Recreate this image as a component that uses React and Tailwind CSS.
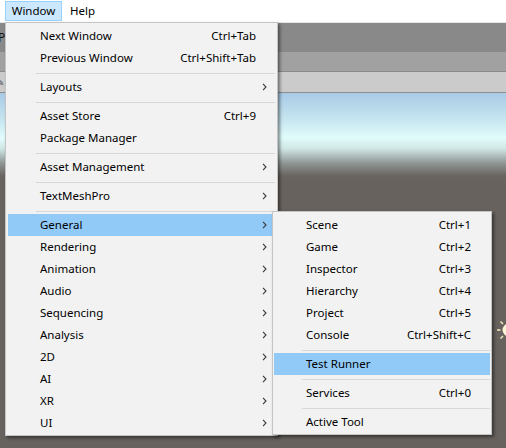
import React from "react";

const font = { fontFamily: "'Noto Sans', 'Noto Sans CJK KR', sans-serif" };

const mainItems = [
  { label: "Next Window", shortcut: "Ctrl+Tab" },
  { label: "Previous Window", shortcut: "Ctrl+Shift+Tab" },
  { sep: true },
  { label: "Layouts", sub: true },
  { sep: true },
  { label: "Asset Store", shortcut: "Ctrl+9" },
  { label: "Package Manager" },
  { sep: true },
  { label: "Asset Management", sub: true },
  { sep: true },
  { label: "TextMeshPro", sub: true },
  { sep: true },
  { label: "General", sub: true, active: true },
  { label: "Rendering", sub: true },
  { label: "Animation", sub: true },
  { label: "Audio", sub: true },
  { label: "Sequencing", sub: true },
  { label: "Analysis", sub: true },
  { label: "2D", sub: true },
  { label: "AI", sub: true },
  { label: "XR", sub: true },
  { label: "UI", sub: true },
];

const subItems = [
  { label: "Scene", shortcut: "Ctrl+1" },
  { label: "Game", shortcut: "Ctrl+2" },
  { label: "Inspector", shortcut: "Ctrl+3" },
  { label: "Hierarchy", shortcut: "Ctrl+4" },
  { label: "Project", shortcut: "Ctrl+5" },
  { label: "Console", shortcut: "Ctrl+Shift+C" },
  { sep: true },
  { label: "Test Runner", active: true },
  { sep: true },
  { label: "Services", shortcut: "Ctrl+0" },
  { sep: true },
  { label: "Active Tool" },
];

const Chevron = () => (
  <svg width="5" height="8" viewBox="0 0 5 8">
    <path d="M1 0.8 L4 4 L1 7.2" fill="none" stroke="#3a3a3a" strokeWidth="1.1" />
  </svg>
);

// Menu row: label, shortcut on the right, chevron column
const MenuRow = ({ item, mx, sepClass }) => {
  if (item.sep) {
    return (
      <div className={`pt-[4px] pb-[2px] ${sepClass}`}>
        <div className="h-[1px] bg-[#d7d7d7]" />
      </div>
    );
  }
  return (
    <div
      className={`flex h-[22px] items-center ${mx} pl-[32px] ${
        item.active ? "bg-[#91c9f7]" : ""
      }`}
    >
      <span className="flex-1 whitespace-nowrap">{item.label}</span>
      {item.shortcut && <span className="whitespace-nowrap">{item.shortcut}</span>}
      <div className="w-[19px] pl-[6px] flex items-center">{item.sub && <Chevron />}</div>
    </div>
  );
};

const Sun = () => (
  <svg width="36" height="32" viewBox="0 0 36 32" className="absolute left-[491px] top-[314px]">
    <circle cx="18" cy="16" r="6.5" fill="#fff5d6" />
    {[0, 45, 90, 135, 180, 225, 270, 315].map((a) => {
      const r = (a * Math.PI) / 180;
      return (
        <line
          key={a}
          x1={18 + Math.cos(r) * 8.5}
          y1={16 + Math.sin(r) * 8.5}
          x2={18 + Math.cos(r) * 12}
          y2={16 + Math.sin(r) * 12}
          stroke="#efe3bb"
          strokeWidth="1.6"
        />
      );
    })}
  </svg>
);

export default function App() {
  return (
    <div
      className="relative w-[506px] h-[448px] overflow-hidden bg-[#67625d] text-[11.5px] text-black"
      style={font}
    >
      {/* Menu bar */}
      <div className="flex h-[22px] items-center bg-white pl-[5px]">
        <div className="flex h-[20px] w-[57px] items-center justify-center border border-[#99d1ff] bg-[#cce8ff]">
          Window
        </div>
        <div className="px-[8px]">Help</div>
      </div>

      {/* Unity editor behind the menu */}
      <div className="h-[1px] bg-[#e6e6e6]" />
      <div className="flex h-[29px] items-center bg-[#898989]">
        <span className="-ml-[2px] text-[12px] text-[#111]">P</span>
      </div>
      <div className="h-[19px] bg-[#a1a1a1]" />
      <div className="h-[1px] bg-[#8a8a8a]" />
      <div className="flex h-[20px] items-center bg-[#cbcbcb]">
        <span className="-ml-[4px] text-[10px] text-[#555]">✎</span>
      </div>
      <div className="h-[1px] bg-[#8d8d8d]" />
      <div className="h-[90px] bg-[linear-gradient(to_bottom,#a8cae6_0%,#c7e6f0_30%,#e1fcfb_50%,#cfe6e4_62%,#8f9694_78%,#6a6560_92%,#67625d_100%)]" />

      <Sun />

      {/* Window menu */}
      <div className="absolute left-[5px] top-[22px] w-[273px] border border-[#c4c4c4] bg-[#f2f2f2] pt-[2px] pb-[1px] shadow-[2px_2px_3px_rgba(0,0,0,0.45)]">
        {mainItems.map((item, i) => (
          <MenuRow key={i} item={item} mx="mx-[2px]" sepClass="ml-[30px] mr-[2px]" />
        ))}
      </div>

      {/* General submenu */}
      <div className="absolute left-[272px] top-[211px] w-[220px] border border-[#c4c4c4] bg-[#f2f2f2] pt-[2px] pb-[1px] shadow-[2px_2px_3px_rgba(0,0,0,0.45)]">
        {subItems.map((item, i) => (
          <MenuRow key={i} item={item} mx="mx-[1px]" sepClass="ml-[29px] mr-[1px]" />
        ))}
      </div>
    </div>
  );
}
